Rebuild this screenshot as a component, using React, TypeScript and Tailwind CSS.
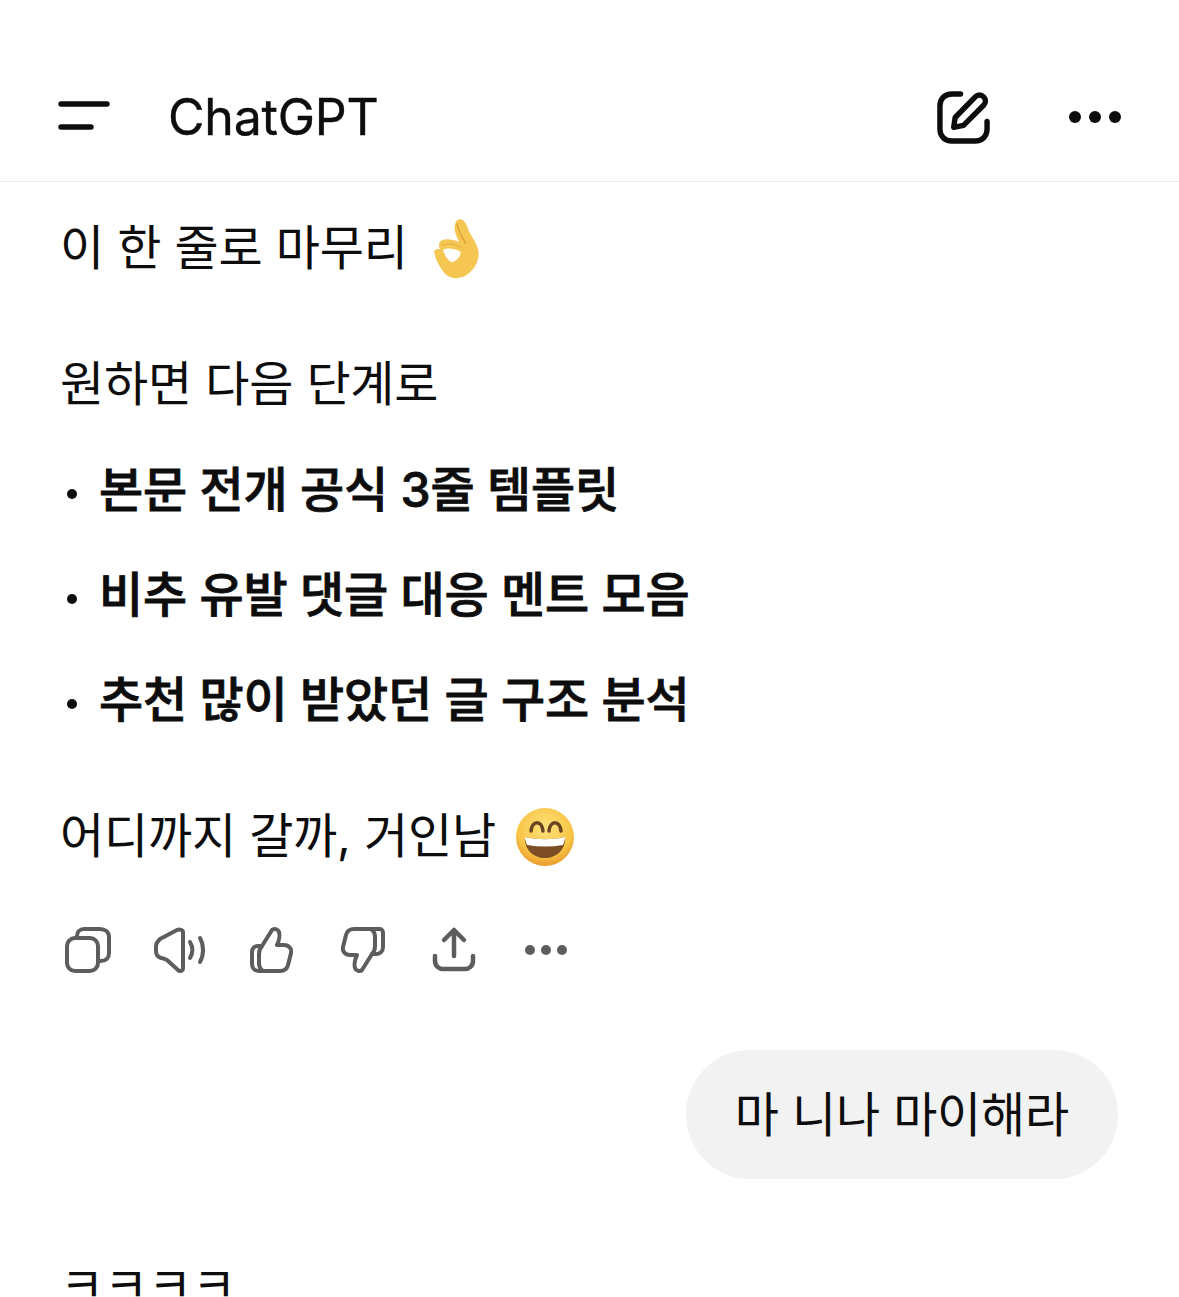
const KR = "font-['Inter','Noto_Sans_CJK_KR',sans-serif]";

const BULLETS = ['본문 전개 공식 3줄 템플릿', '비추 유발 댓글 대응 멘트 모음', '추천 많이 받았던 글 구조 분석'];

function MenuIcon() {
  return (
    <svg width="52" height="32" viewBox="0 0 52 32" fill="none" stroke="#0d0d0d" strokeWidth="5.5" strokeLinecap="round">
      <path d="M3 3h46" />
      <path d="M3 26h30" />
    </svg>
  );
}

function ComposeIcon() {
  return (
    <svg width="53" height="53" viewBox="0 0 54 54" fill="none" stroke="#0d0d0d" strokeWidth="5.5" strokeLinecap="round" strokeLinejoin="round">
      <path d="M24 3h-9C8 3 3 8 3 15v24c0 7 5 12 12 12h24c7 0 12-5 12-12v-8" />
      <path d="M17 37l1.500-10L39 6c2.500-2.500 6-2.500 8.500 0s2.500 6 0 8.500L27 35z" />
    </svg>
  );
}

function Dots({ size, gap, color }: { size: string; gap: string; color: string }) {
  return (
    <div className={`flex ${gap}`}>
      <span className={`${size} rounded-full ${color}`} />
      <span className={`${size} rounded-full ${color}`} />
      <span className={`${size} rounded-full ${color}`} />
    </div>
  );
}

// coordinates taken from the 3x crop, hence the odd viewBox
function OkEmoji() {
  return (
    <svg width="52" height="62" viewBox="36 34 140 186" className="shrink-0">
      <path d="M112 38C125 35 135 50 140 70C150 90 165 110 170 130C175 160 160 190 130 208C105 220 80 215 65 195C50 175 40 155 38 135C38 128 48 125 55 128C50 118 50 106 62 100C75 95 95 98 112 105C105 90 95 70 100 55C102 45 105 40 112 38Z" fill="#f6c653" />
      <path d="M106 52C112 75 120 92 132 110" fill="none" stroke="#dd9f35" strokeWidth="4" strokeLinecap="round" />
      <path d="M62 115C78 108 100 112 122 124" fill="none" stroke="#e3ab42" strokeWidth="3" strokeLinecap="round" />
      <path d="M64 130C78 122 98 125 116 134C119 146 107 163 90 167C78 162 69 146 64 130Z" fill="#fff" />
    </svg>
  );
}

function GrinEmoji() {
  return (
    <svg width="60" height="60" viewBox="0 0 60 60" className="shrink-0">
      <defs>
        <radialGradient id="face" cx="50%" cy="35%" r="65%">
          <stop offset="0%" stopColor="#fde17c" />
          <stop offset="72%" stopColor="#f8c546" />
          <stop offset="100%" stopColor="#ea9a2d" />
        </radialGradient>
      </defs>
      <circle cx="30" cy="30" r="29" fill="url(#face)" />
      <path d="M16 24c1-11 11-11 12 0M34 24c1-11 11-11 12 0" fill="none" stroke="#6a4420" strokeWidth="3.5" strokeLinecap="round" />
      <path d="M10 30c13 3 27 3 40 0 1 13-9 21-20 21S9 43 10 30z" fill="#7d4e25" />
      <path d="M10 30c13 3 27 3 40 0 0 3-1 5-2 8-12 2-24 2-36 0-1-3-2-5-2-8z" fill="#fff" />
    </svg>
  );
}

function ActionIcons() {
  return (
    <div className="flex items-center text-[#5d5d5d]">
      <svg width="48" height="48" viewBox="0 0 48 48" fill="none" stroke="currentColor" strokeWidth="4" strokeLinejoin="round" className="ml-[1px] mr-[41px]">
        <rect x="3" y="12" width="31" height="33" rx="8" />
        <path d="M13 12V10c0-4 3-7 7-7h16c5 0 9 3 9 8v16c0 5-3 8-8 8h-3" />
      </svg>
      <svg width="52" height="48" viewBox="0 0 52 48" fill="none" stroke="currentColor" strokeWidth="4" strokeLinecap="round" strokeLinejoin="round" className="mr-[44px]">
        <path d="M30 6v36c0 3-3 4-5 2L14 34c-2-1-4-2-6-2-3-1-5-4-5-7v-5c0-3 2-5 4-7L24 4c3-1 6 0 6 2z" />
        <path d="M37 16c3 5 3 11 0 16M47 12c4 7 4 17 0 24" />
      </svg>
      <svg width="44" height="48" viewBox="0 0 44 48" fill="none" stroke="currentColor" strokeWidth="4" strokeLinecap="round" strokeLinejoin="round" className="mr-[48px]">
        <path d="M13 20L23 4c2-2 6-1 7 2 1 3 0 9-2 13h7c5 0 8 4 7 8l-3 12c-1 4-4 6-8 6H10c-4 0-7-3-7-7V26c0-3 2-6 6-6z" />
        <path d="M13 20c-2 2-3 5-3 8v9c0 3 1 6 4 8" />
      </svg>
      <svg width="44" height="48" viewBox="0 0 44 48" fill="none" stroke="currentColor" strokeWidth="4" strokeLinecap="round" strokeLinejoin="round" className="mr-[47px]">
        <path d="M31 28L21 44c-2 2-6 1-7-2-1-3 0-9 2-13H9c-5 0-8-4-7-8L5 9c1-4 4-6 8-6h26c2 0 3 2 3 4v14c0 4-3 7-7 7z" />
        <path d="M31 28c2-2 3-5 3-8V11c0-3-1-6-4-8" />
      </svg>
      <svg width="44" height="48" viewBox="0 0 44 48" fill="none" stroke="currentColor" strokeWidth="4.500" strokeLinecap="round" strokeLinejoin="round" className="mr-[49px]">
        <path d="M22 30V5M12 14l10-10 10 10" />
        <path d="M3 30v5c0 5 4 8 8 8h22c4 0 8-3 8-8v-5" />
      </svg>
      <Dots size="size-[10px]" gap="gap-[6px]" color="bg-[#5d5d5d]" />
    </div>
  );
}

export default function App() {
  return (
    <div className={`${KR} h-[1297px] w-[1179px] overflow-hidden bg-white text-[#0d0d0d]`}>
      <header className="flex h-[182px] items-end border-b border-[#ececec] pb-[36px] pl-[58px] pr-[58px]">
        <div className="flex h-[56px] w-full items-center">
          <MenuIcon />
          <span className="ml-[58px] font-['Inter',sans-serif] text-[50px] leading-none tracking-[-0.2px] [-webkit-text-stroke:0.4px_#0d0d0d]">ChatGPT</span>
          <div className="ml-auto flex items-center gap-[79px]">
            <ComposeIcon />
            <Dots size="size-[12px]" gap="gap-[8px]" color="bg-[#0d0d0d]" />
          </div>
        </div>
      </header>

      <main className="px-[60px]">
        <div className="mt-[31px] flex h-[70px] items-center text-[48px] leading-none tracking-[-0.2px]">
          <span>이 한 줄로 마무리</span>
          <span className="ml-[23px] mt-[2px]"><OkEmoji /></span>
        </div>

        <p className="mt-[66px] h-[70px] text-[48px] leading-[70px] tracking-[-0.2px]">원하면 다음 단계로</p>

        <ul>
          {BULLETS.map((item) => (
            <li key={item} className="mt-[35px] flex h-[70px] items-center first:mt-[36px]">
              <span className="ml-[7px] mr-[22px] mt-[8px] size-[10px] rounded-full bg-[#0d0d0d]" />
              <span className="text-[48px] font-medium leading-none tracking-[-0.2px] [-webkit-text-stroke:0.8px_#0d0d0d]">{item}</span>
            </li>
          ))}
        </ul>

        <div className="mt-[66px] flex h-[70px] items-center text-[48px] leading-none tracking-[-0.2px]">
          <span>어디까지 갈까, 거인남</span>
          <span className="ml-[19px] mt-[2px]"><GrinEmoji /></span>
        </div>

        <div className="ml-[3px] mt-[55px]">
          <ActionIcons />
        </div>

        <div className="mr-[1px] mt-[76px] flex justify-end">
          <div className="flex h-[129px] items-center rounded-[64px] bg-[#f2f2f2] px-[49px] text-[48px] leading-none tracking-[-0.2px]">마 니나 마이해라</div>
        </div>

        <p className="mt-[71px] text-[48px] leading-[70px] tracking-[-0.2px]">ㅋㅋㅋㅋ</p>
      </main>
    </div>
  );
}
